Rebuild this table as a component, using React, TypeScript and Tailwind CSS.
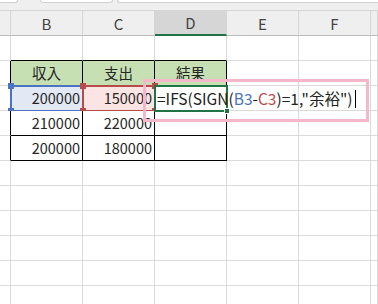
const cols = ["", "B", "C", "D", "E", "F", ""];
const colW = ["w-[11px]", "w-[72px]", "w-[72px]", "w-[72px]", "w-[72px]", "w-[72px]", "flex-1"];

// sheet data keyed by row index (1-based, like the sheet) and column index
const data: Record<number, string[]> = {
  2: ["", "収入", "支出", "結果"],
  3: ["", "200000", "150000", ""],
  4: ["", "210000", "220000", ""],
  5: ["", "200000", "180000", ""],
};

const font = { fontFamily: '"Noto Sans CJK JP", "Noto Sans", sans-serif' };

function Cell({ r, c }: { r: number; c: number }) {
  const inTable = r >= 2 && r <= 5;
  const rightBlack = inTable && c >= 0 && c <= 3;
  const bottomBlack = r >= 1 && r <= 5 && c >= 1 && c <= 3;
  const text = data[r]?.[c] ?? "";
  const isHead = r === 2 && c >= 1 && c <= 3;

  let bg = "bg-white";
  if (isHead) bg = "bg-[#c6e0b4]";
  if (r === 3 && c === 1) bg = "bg-[#e2e9f5]";
  if (r === 3 && c === 2) bg = "bg-[#fbe4e4]";

  return (
    <div
      className={`${colW[c]} ${bg} relative h-[25px] shrink-0 border-r border-b ${
        rightBlack ? "border-r-black" : "border-r-[#dadada]"
      } ${bottomBlack ? "border-b-black" : "border-b-[#dadada]"} flex items-center text-[14.5px] text-[#262626] ${
        isHead ? "justify-center" : "justify-end pr-[2px]"
      }`}
    >
      {text && <span className="leading-none">{text}</span>}

      {/* reference outlines drawn while the formula is edited */}
      {r === 3 && c === 1 && <RefBox color="border-[#4a74c0]" handle="bg-[#4a74c0]" />}
      {r === 3 && c === 2 && <RefBox color="border-[#b84a4a]" handle="bg-[#b84a4a]" />}
      {r === 3 && c === 3 && <EditCell />}
    </div>
  );
}

function RefBox({ color, handle }: { color: string; handle: string }) {
  return (
    <div className={`absolute -left-[1px] -top-[1px] w-[74px] h-[27px] border-2 ${color} pointer-events-none`}>
      <div className={`absolute -left-[4px] -top-[4px] w-[6px] h-[6px] ${handle}`} />
      <div className={`absolute -right-[4px] -top-[4px] w-[6px] h-[6px] ${handle}`} />
      <div className={`absolute -left-[4px] -bottom-[4px] w-[6px] h-[6px] ${handle}`} />
      <div className={`absolute -right-[4px] -bottom-[4px] w-[6px] h-[6px] ${handle}`} />
    </div>
  );
}

function EditCell() {
  return (
    <>
      <div className="absolute -left-[1px] -top-[1px] w-[74px] h-[27px] border-2 border-[#217346] z-10">
        <div className="absolute -right-[4px] -bottom-[4px] w-[6px] h-[6px] bg-[#217346] border border-white" />
      </div>
      <div className="absolute left-[2px] top-0 h-[25px] flex items-center whitespace-nowrap z-20 text-[15.5px] text-[#222]">
        <span className="leading-none">
          =IFS(SIGN(<span className="text-[#4a74c0]">B3</span>-<span className="text-[#b84a4a]">C3</span>)=1,"余裕")
        </span>
        <span className="ml-[3px] w-[1px] h-[18px] bg-black" />
      </div>
      {/* pink annotation frame */}
      <div className="absolute -left-[12px] -top-[7px] w-[226px] h-[43px] border-[3px] border-[#f5b8cb] z-30" />
    </>
  );
}

export default function App() {
  const rows = Array.from({ length: 11 }, (_, i) => i + 1);
  return (
    <div className="w-[378px] h-[304px] overflow-hidden bg-white" style={font}>
      {/* strip above the sheet with the bottoms of the ribbon tabs */}
      <div className="h-[11px] bg-[#efefef] border-b border-[#d6d6d6] flex items-start">
        <div className="w-[18px] h-[3px] bg-white border-b border-r border-[#d0d0d0] rounded-br-[4px]" />
        <div className="ml-[22px] w-[73px] h-[3px] bg-white border border-t-0 border-[#d0d0d0] rounded-b-[4px]" />
        <div className="ml-[4px] flex-1 h-[3px] bg-white border border-t-0 border-r-0 border-[#d0d0d0] rounded-bl-[4px]" />
      </div>

      {/* column headers */}
      <div className="flex h-[25px]">
        {cols.map((l, c) => (
          <div
            key={c}
            className={`${colW[c]} shrink-0 h-[25px] border-r border-r-[#d4d4d4] flex items-center justify-center text-[15px] text-[#444] ${
              c === 3 ? "bg-[#d6d6d6] border-b-2 border-b-[#217346]" : "bg-[#efefef] border-b border-b-[#bcbcbc]"
            }`}
          >
            <span className="leading-none">{l}</span>
          </div>
        ))}
      </div>

      {rows.map((r) => (
        <div key={r} className="flex">
          {cols.map((_, c) => (
            <Cell key={c} r={r} c={c} />
          ))}
        </div>
      ))}
    </div>
  );
}
